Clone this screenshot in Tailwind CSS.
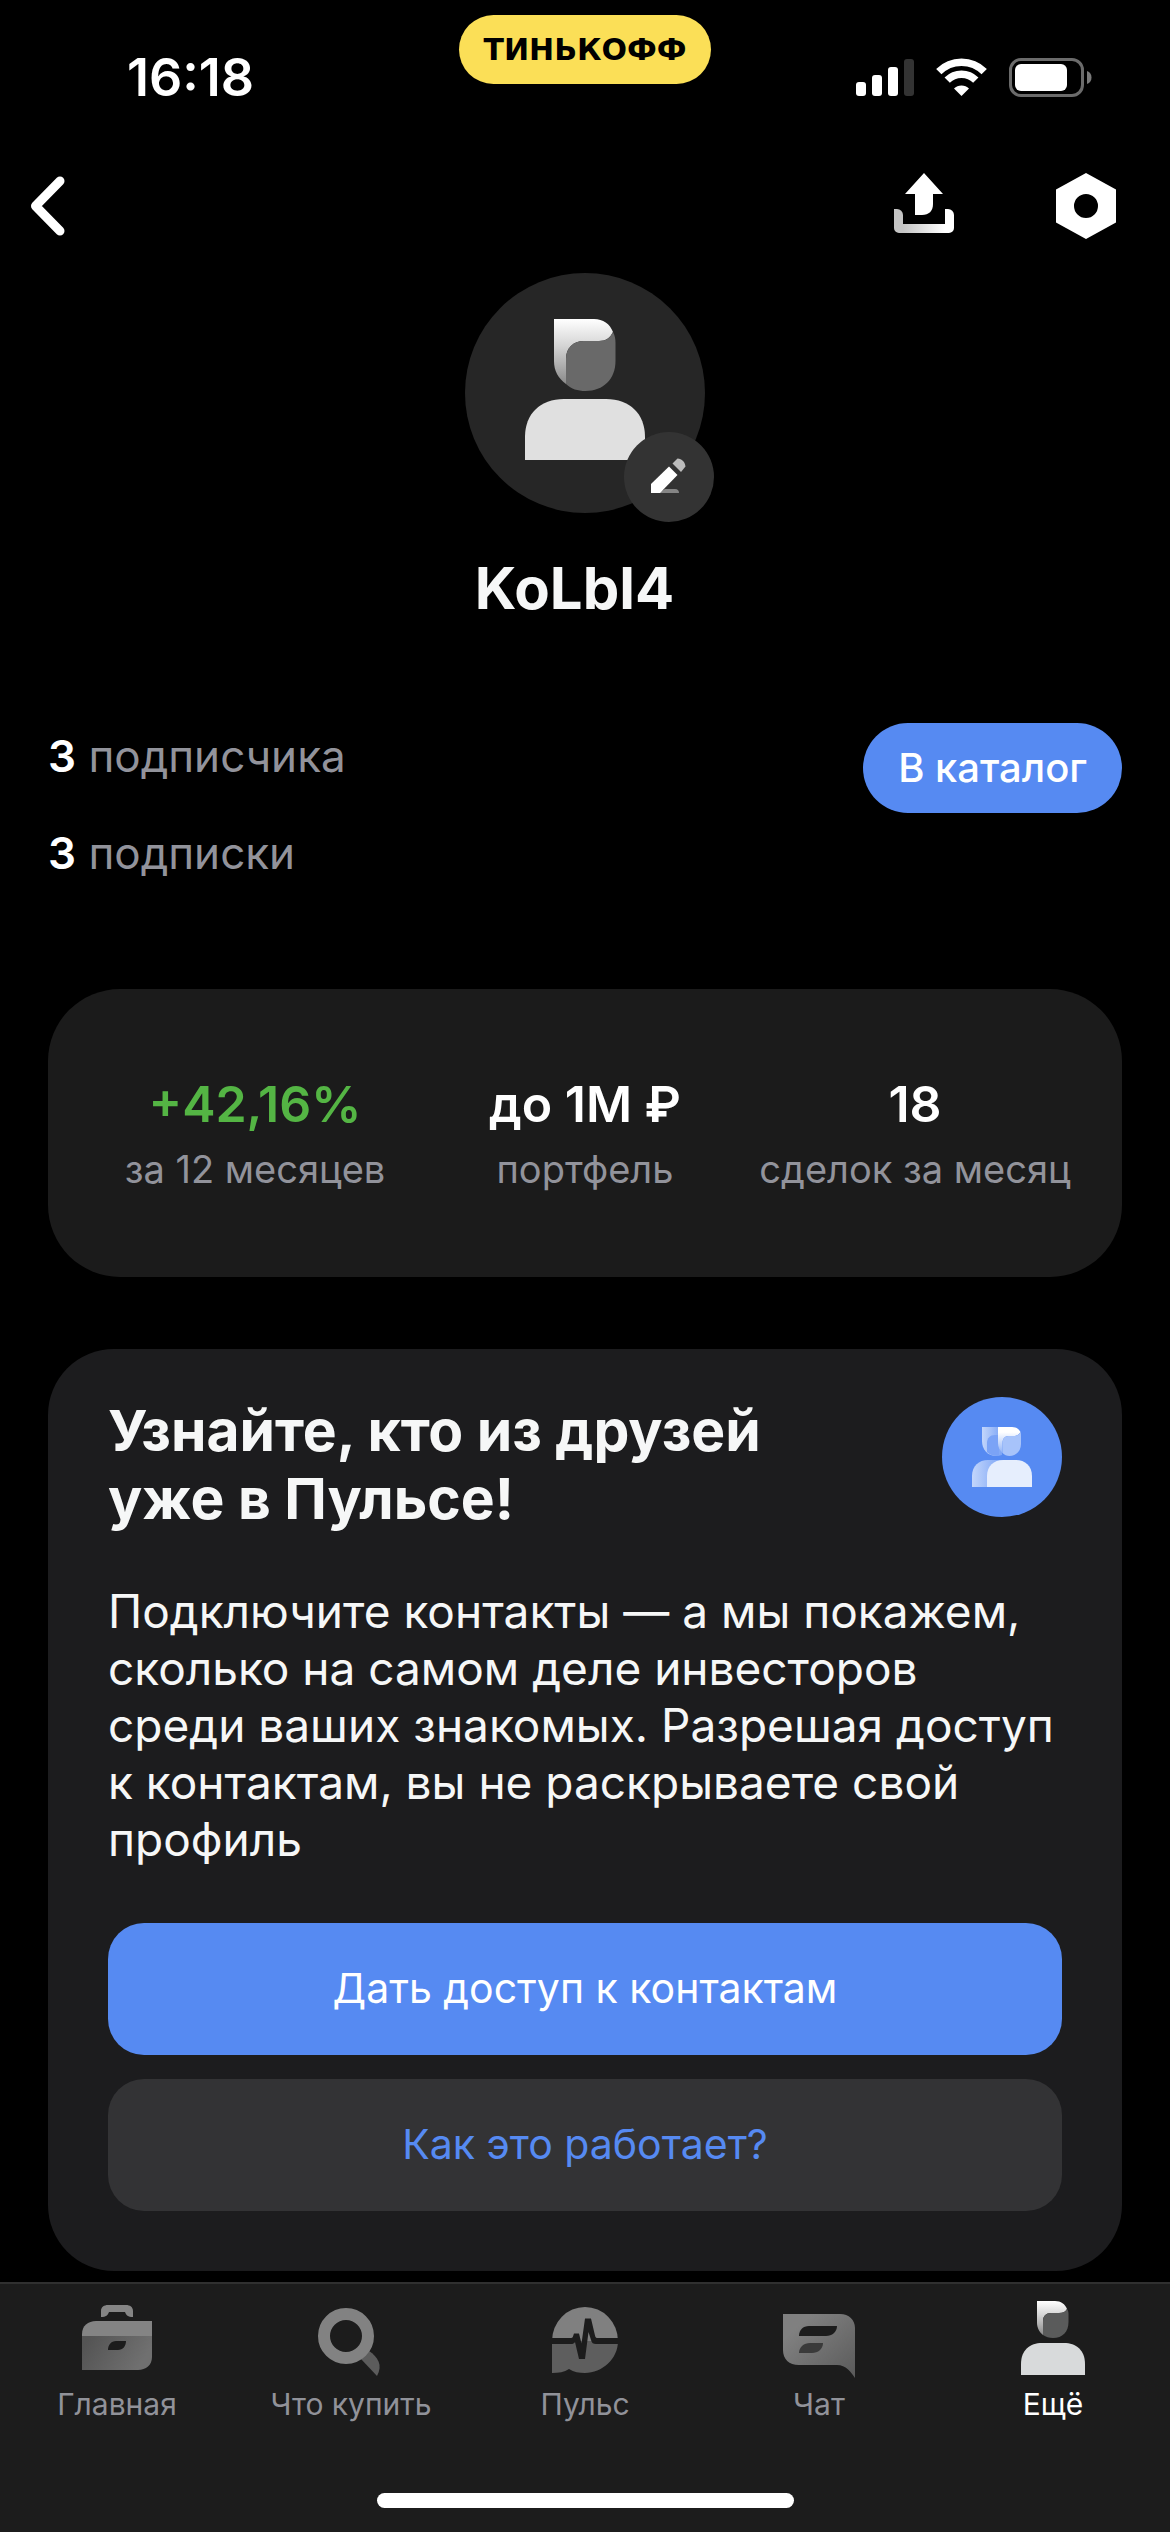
<!DOCTYPE html>
<html lang="ru">
<head>
    <meta charset="UTF-8">
    <meta name="viewport" content="width=device-width, initial-scale=1.0">
    <title>Профиль</title>
    <script src="https://cdn.jsdelivr.net/npm/@tailwindcss/browser@4"></script>
</head>
<body class="bg-black text-white font-['Inter','Liberation_Sans',sans-serif]">
    <div class="min-h-screen flex flex-col">

        <!-- Строка состояния -->
        <div class="grid grid-cols-3 h-[156px]">
            <div class="pt-[48px] pl-[127px] text-[52px] leading-[60px] font-semibold">16:18</div>
            <div class="flex justify-center items-start pt-[15px]">
                <div class="h-[69px] px-6 rounded-full bg-[#fbdf57] text-black flex items-center font-['DejaVu_Sans',sans-serif] font-bold text-[30px]">ТИНЬКОФФ</div>
            </div>
            <div class="flex items-start justify-end gap-[22px] pt-[58px] pr-[78px]">
                <svg class="w-[58px] h-[39px]" viewBox="0 0 58 39">
                    <g fill="#fff">
                        <rect x="0" y="24" width="10" height="14" rx="3"/>
                        <rect x="16" y="17" width="10" height="21" rx="3"/>
                        <rect x="32" y="9" width="10" height="29" rx="3"/>
                    </g>
                    <rect x="48" y="1" width="10" height="37" rx="3" fill="#333"/>
                </svg>
                <svg class="w-[51px] h-[39px]" viewBox="0 0 51 39">
                    <g fill="none" stroke="#fff" stroke-width="7.5">
                        <path d="M2.8 13.6a32 32 0 0 1 45.4 0"/>
                        <path d="M11.2 22.2a20.2 20.2 0 0 1 28.6 0"/>
                    </g>
                    <path d="M18 30.5a10.6 10.6 0 0 1 15 0L25.5 38z" fill="#fff"/>
                </svg>
                <svg class="w-[83px] h-[39px]" viewBox="0 0 83 39">
                    <rect x="1.5" y="1.5" width="72" height="36" rx="10.5" fill="none" stroke="#6b6b6b" stroke-width="3"/>
                    <rect x="6" y="6" width="52" height="27" rx="6" fill="#fff"/>
                    <path d="M78 13c3 1 4.5 3.5 4.5 6.5S81 25 78 26z" fill="#7a7a7a"/>
                </svg>
            </div>
        </div>

        <!-- Шапка -->
        <header class="flex items-center justify-between h-[100px] pl-[30px] pr-[54px]">
            <button type="button" aria-label="Назад">
                <svg class="w-[36px] h-[60px]" viewBox="0 0 36 60">
                    <path d="M30 5L5.5 30 30 55" fill="none" stroke="#fff" stroke-width="9" stroke-linecap="round" stroke-linejoin="round"/>
                </svg>
            </button>
            <div class="flex items-center gap-[102px]">
                <button type="button" aria-label="Поделиться">
                    <svg class="w-[60px] h-[66px]" viewBox="0 0 60 66">
                        <defs>
                            <linearGradient id="tray" x1="0" x2="1">
                                <stop offset="0.15" stop-color="#c4c4c4"/>
                                <stop offset="0.85" stop-color="#fff"/>
                            </linearGradient>
                        </defs>
                        <path d="M30 0L49 21H39V31c0 7-4 11-11 11H21V21H11z" fill="#fff"/>
                        <path d="M0 36h3a6 6 0 0 1 6 6v9h42V36h3a6 6 0 0 1 6 6v13a5 5 0 0 1-5 5H5a5 5 0 0 1-5-5z" fill="url(#tray)"/>
                    </svg>
                </button>
                <button type="button" aria-label="Настройки">
                    <svg class="w-[60px] h-[66px]" viewBox="0 0 60 66">
                        <path d="M30 0L60 16.5V49.5L30 66 0 49.5V16.5zM30 21a12 12 0 1 0 0 24 12 12 0 0 0 0-24z" fill="#fff" fill-rule="evenodd"/>
                    </svg>
                </button>
            </div>
        </header>

        <main class="flex flex-col px-[48px] pt-[17px] pb-[11px]">
            <!-- Аватар и имя -->
            <div class="relative self-center w-[240px] h-[240px] rounded-full bg-[#262626]">
                <svg class="w-[240px] h-[240px]" viewBox="0 0 240 240">
                    <defs>
                        <linearGradient id="hair" x1="0" y1="0" x2="0" y2="1">
                            <stop offset="0" stop-color="#fff"/>
                            <stop offset="0.4" stop-color="#d6d6d6"/>
                            <stop offset="1" stop-color="#8a8a8a"/>
                        </linearGradient>
                    </defs>
                    <path d="M89 46h40c9 0 16 5 19 13-3 6-7 9-14 9h-15c-11 0-18 7-18 18v25c-8-6-12-13-12-23z" fill="url(#hair)"/>
                    <path d="M148 59c2 4 2.5 7 2.5 11v18c0 18-12 30-30 30-8 0-14-2-19.5-7V86c0-11 7-18 18-18h15c7 0 11-3 14-9z" fill="#696969"/>
                    <path d="M60 187v-23c0-23 15-38 39-38h42c24 0 39 15 39 38v23z" fill="#e0e0e0"/>
                </svg>
                <button type="button" aria-label="Изменить фото" class="absolute left-[159px] top-[159px] w-[90px] h-[90px] rounded-full bg-[#333]">
                    <svg class="w-[90px] h-[90px]" viewBox="0 0 90 90">
                        <path d="M34 61L41 57h10c3 0 4 2 4 4z" fill="#858585"/>
                        <path d="M27 52L45 34.5 53.5 43 36 61H27z" fill="#fff"/>
                        <path d="M48.5 31.5L53.5 26.5C58 27 61 30 61.5 34.5L57 40z" fill="#bdbdbd"/>
                    </svg>
                </button>
            </div>
            <h1 class="mt-[40px] pr-[21px] text-center text-[58px] leading-[70px] font-bold text-[#f6f7f7]">KoLbl4</h1>

            <!-- Подписчики -->
            <div class="mt-[100px] flex items-start justify-between">
                <div class="flex flex-col gap-[41px] pt-[5px] text-[44px] leading-[56px] text-[#92939b]">
                    <a href="#followers"><span class="font-semibold text-white">3</span> подписчика</a>
                    <a href="#following"><span class="font-semibold text-white">3</span> подписки</a>
                </div>
                <button type="button" class="h-[90px] px-[35px] rounded-full bg-[#568af2] text-[40px] font-medium">В каталог</button>
            </div>

            <!-- Показатели -->
            <section class="mt-[108px] h-[288px] px-[42px] pt-2 rounded-[72px] bg-[#1b1b1b] grid grid-cols-3 items-center text-center">
                <div>
                    <p class="text-[50px] leading-[64px] font-semibold text-[#54b544]">+42,16%</p>
                    <p class="text-[38px] leading-[66px] text-[#92939b] whitespace-nowrap">за 12 месяцев</p>
                </div>
                <div>
                    <p class="text-[50px] leading-[64px] font-semibold">до 1М ₽</p>
                    <p class="text-[38px] leading-[66px] text-[#92939b]">портфель</p>
                </div>
                <div>
                    <p class="text-[50px] leading-[64px] font-semibold">18</p>
                    <p class="text-[38px] leading-[66px] text-[#92939b] whitespace-nowrap">сделок за месяц</p>
                </div>
            </section>

            <!-- Контакты -->
            <section class="mt-[72px] px-[60px] pt-[48px] pb-[60px] rounded-[66px] bg-[#1c1c1e]">
                <div class="flex justify-between items-start">
                    <h2 class="text-[57px] leading-[68px] font-bold text-[#f6f7f7]">Узнайте, кто из друзей<br>уже в Пульсе!</h2>
                    <div class="w-[120px] h-[120px] shrink-0 rounded-full bg-[#568af2]">
                        <svg class="w-[120px] h-[120px]" viewBox="0 0 120 120">
                            <defs>
                                <linearGradient id="backMan" x1="0" x2="1">
                                    <stop offset="0" stop-color="#c3d6fb"/>
                                    <stop offset="1" stop-color="#7ba4f6"/>
                                </linearGradient>
                                <linearGradient id="frontHair" x1="0" y1="0" x2="0" y2="1">
                                    <stop offset="0.2" stop-color="#fff"/>
                                    <stop offset="1" stop-color="#8fb2f7"/>
                                </linearGradient>
                            </defs>
                            <path d="M40 30h20v28c-12 4-20-4-20-14z" fill="url(#backMan)"/>
                            <path d="M45 55V46c0-5 3-8 8-8h4v21c-5 0-9-1-12-4z" fill="#7ba3f6"/>
                            <path d="M30 90V79c0-10 7-16 16-16h14v27z" fill="url(#backMan)"/>
                            <path d="M56 30h14c4 0 7 2 8.5 5-2 3-4 4-7 4h-5c-4 0-6 3-6 7v10c-3-3-4.5-6-4.5-10z" fill="url(#frontHair)"/>
                            <path d="M78.5 35c.5 1 .5 3 .5 4v8c0 7-5 12-11.5 12-3 0-5-1-7-3V46c0-4 2-7 6-7h5c3 0 5-1 7-4z" fill="#a7c3fa"/>
                            <path d="M45 90V79c0-10 7-16 16-16h13c9 0 16 6 16 16v11z" fill="#e6eefd"/>
                        </svg>
                    </div>
                </div>
                <p class="mt-[50px] text-[46px] leading-[57px] text-[#f6f7f7]">Подключите контакты — а мы покажем,<br>сколько на самом деле инвесторов<br>среди ваших знакомых. Разрешая доступ<br>к контактам, вы не раскрываете свой<br>профиль</p>
                <div class="mt-[55px] flex flex-col gap-6 text-[41px]">
                    <button type="button" class="h-[132px] rounded-[36px] bg-[#568af2]">Дать доступ к контактам</button>
                    <button type="button" class="h-[132px] rounded-[36px] bg-[#333335] text-[#568af2]">Как это работает?</button>
                </div>
            </section>
        </main>

        <!-- Нижнее меню -->
        <footer class="mt-auto border-t-2 border-[#303030] bg-[#1c1c1c]">
            <nav class="grid grid-cols-5 pt-[16px] text-[30px] leading-[36px] text-[#919299]">
                <a href="#home" class="flex flex-col items-center gap-[6px]">
                    <svg class="w-[80px] h-[80px]" viewBox="0 0 80 80">
                        <defs>
                            <linearGradient id="case" x1="0" y1="0" x2="1" y2="0.3">
                                <stop offset="0.1" stop-color="#545454"/>
                                <stop offset="1" stop-color="#707070"/>
                            </linearGradient>
                        </defs>
                        <path d="M24 17v-6c0-4 3-6 7-6h18c4 0 7 2 7 6v6c-5 0-7-2-8-5H32c-1 3-3 5-8 5z" fill="#858585"/>
                        <path d="M5 36v-2c0-8 6-13 14-13h56v15z" fill="#848484"/>
                        <path d="M5 36h70v21c0 8-6 13-14 13H5zM49 41H39c-5 0-8 4-8 9h10c5 0 8-4 8-9z" fill="url(#case)" fill-rule="evenodd"/>
                    </svg>
                    Главная
                </a>
                <a href="#buy" class="flex flex-col items-center gap-[6px]">
                    <svg class="w-[80px] h-[80px]" viewBox="0 0 80 80">
                        <path d="M50 59l8-8c9 6 14 14 8 25z" fill="#5c5c5c"/>
                        <circle cx="35" cy="36" r="22" fill="none" stroke="#828282" stroke-width="12"/>
                    </svg>
                    Что купить
                </a>
                <a href="#pulse" class="flex flex-col items-center gap-[6px]">
                    <svg class="w-[80px] h-[80px]" viewBox="0 0 80 80">
                        <path d="M7 41a33 34 0 0 1 66 0z" fill="#808080"/>
                        <path d="M7 41h66c0 18-16 32-33 32-6 0-11-1-16-4-5 3-10 4-17 4z" fill="#5e5e5e"/>
                        <path d="M6 38h20c2 0 2-2 3-4.500h5l2.500 10L40 18.500h6l4 17c.5 2 1 2.500 3 2.500h21v6H51c-3 0-4-1-5-4l-2.500-8-3.500 27h-6l-4-17c-1 1.500-2 2-4 2H6z" fill="#1c1c1c"/>
                    </svg>
                    Пульс
                </a>
                <a href="#chat" class="flex flex-col items-center gap-[6px]">
                    <svg class="w-[80px] h-[80px]" viewBox="0 0 80 80">
                        <defs>
                            <linearGradient id="bubble" x1="0" y1="0" x2="1" y2="1">
                                <stop offset="0.2" stop-color="#808080"/>
                                <stop offset="1" stop-color="#5a5a5a"/>
                            </linearGradient>
                        </defs>
                        <path d="M4 14h57c9 0 15 6 15 14v50c-4-6-9-13-18-13H20C10 65 4 59 4 50z" fill="url(#bubble)"/>
                        <path d="M58 26H30c-6 0-10 4-10 10h27c6 0 11-4 11-10z" fill="#1c1c1c"/>
                        <path d="M44 43H31c-6 0-11 4-11 10h13c6 0 11-4 11-10z" fill="#3a3a3a"/>
                    </svg>
                    Чат
                </a>
                <a href="#more" class="flex flex-col items-center gap-[6px] text-white">
                    <svg class="w-[80px] h-[80px]" viewBox="0 0 80 80">
                        <path d="M24 1h18c6 0 10 3 12 8-2 3-4 4-8 4h-8c-5 0-8 3-8 8v14c-4-3-6-8-6-12z" fill="url(#hair)"/>
                        <path d="M54 9c1 1 1.5 3 1.5 5v8c0 10-6 16-15.5 16-4 0-7-1-10-3V21c0-5 3-8 8-8h8c4 0 6-1 8-4z" fill="#5a5b5b"/>
                        <path d="M8 75V64c0-14 9-21 21-21h22c12 0 21 7 21 21v11z" fill="#d8dadb"/>
                    </svg>
                    Ещё
                </a>
            </nav>
            <div class="mx-auto mt-[71px] mb-6 w-[417px] h-[15px] rounded-full bg-white"></div>
        </footer>
    </div>
</body>
</html>
